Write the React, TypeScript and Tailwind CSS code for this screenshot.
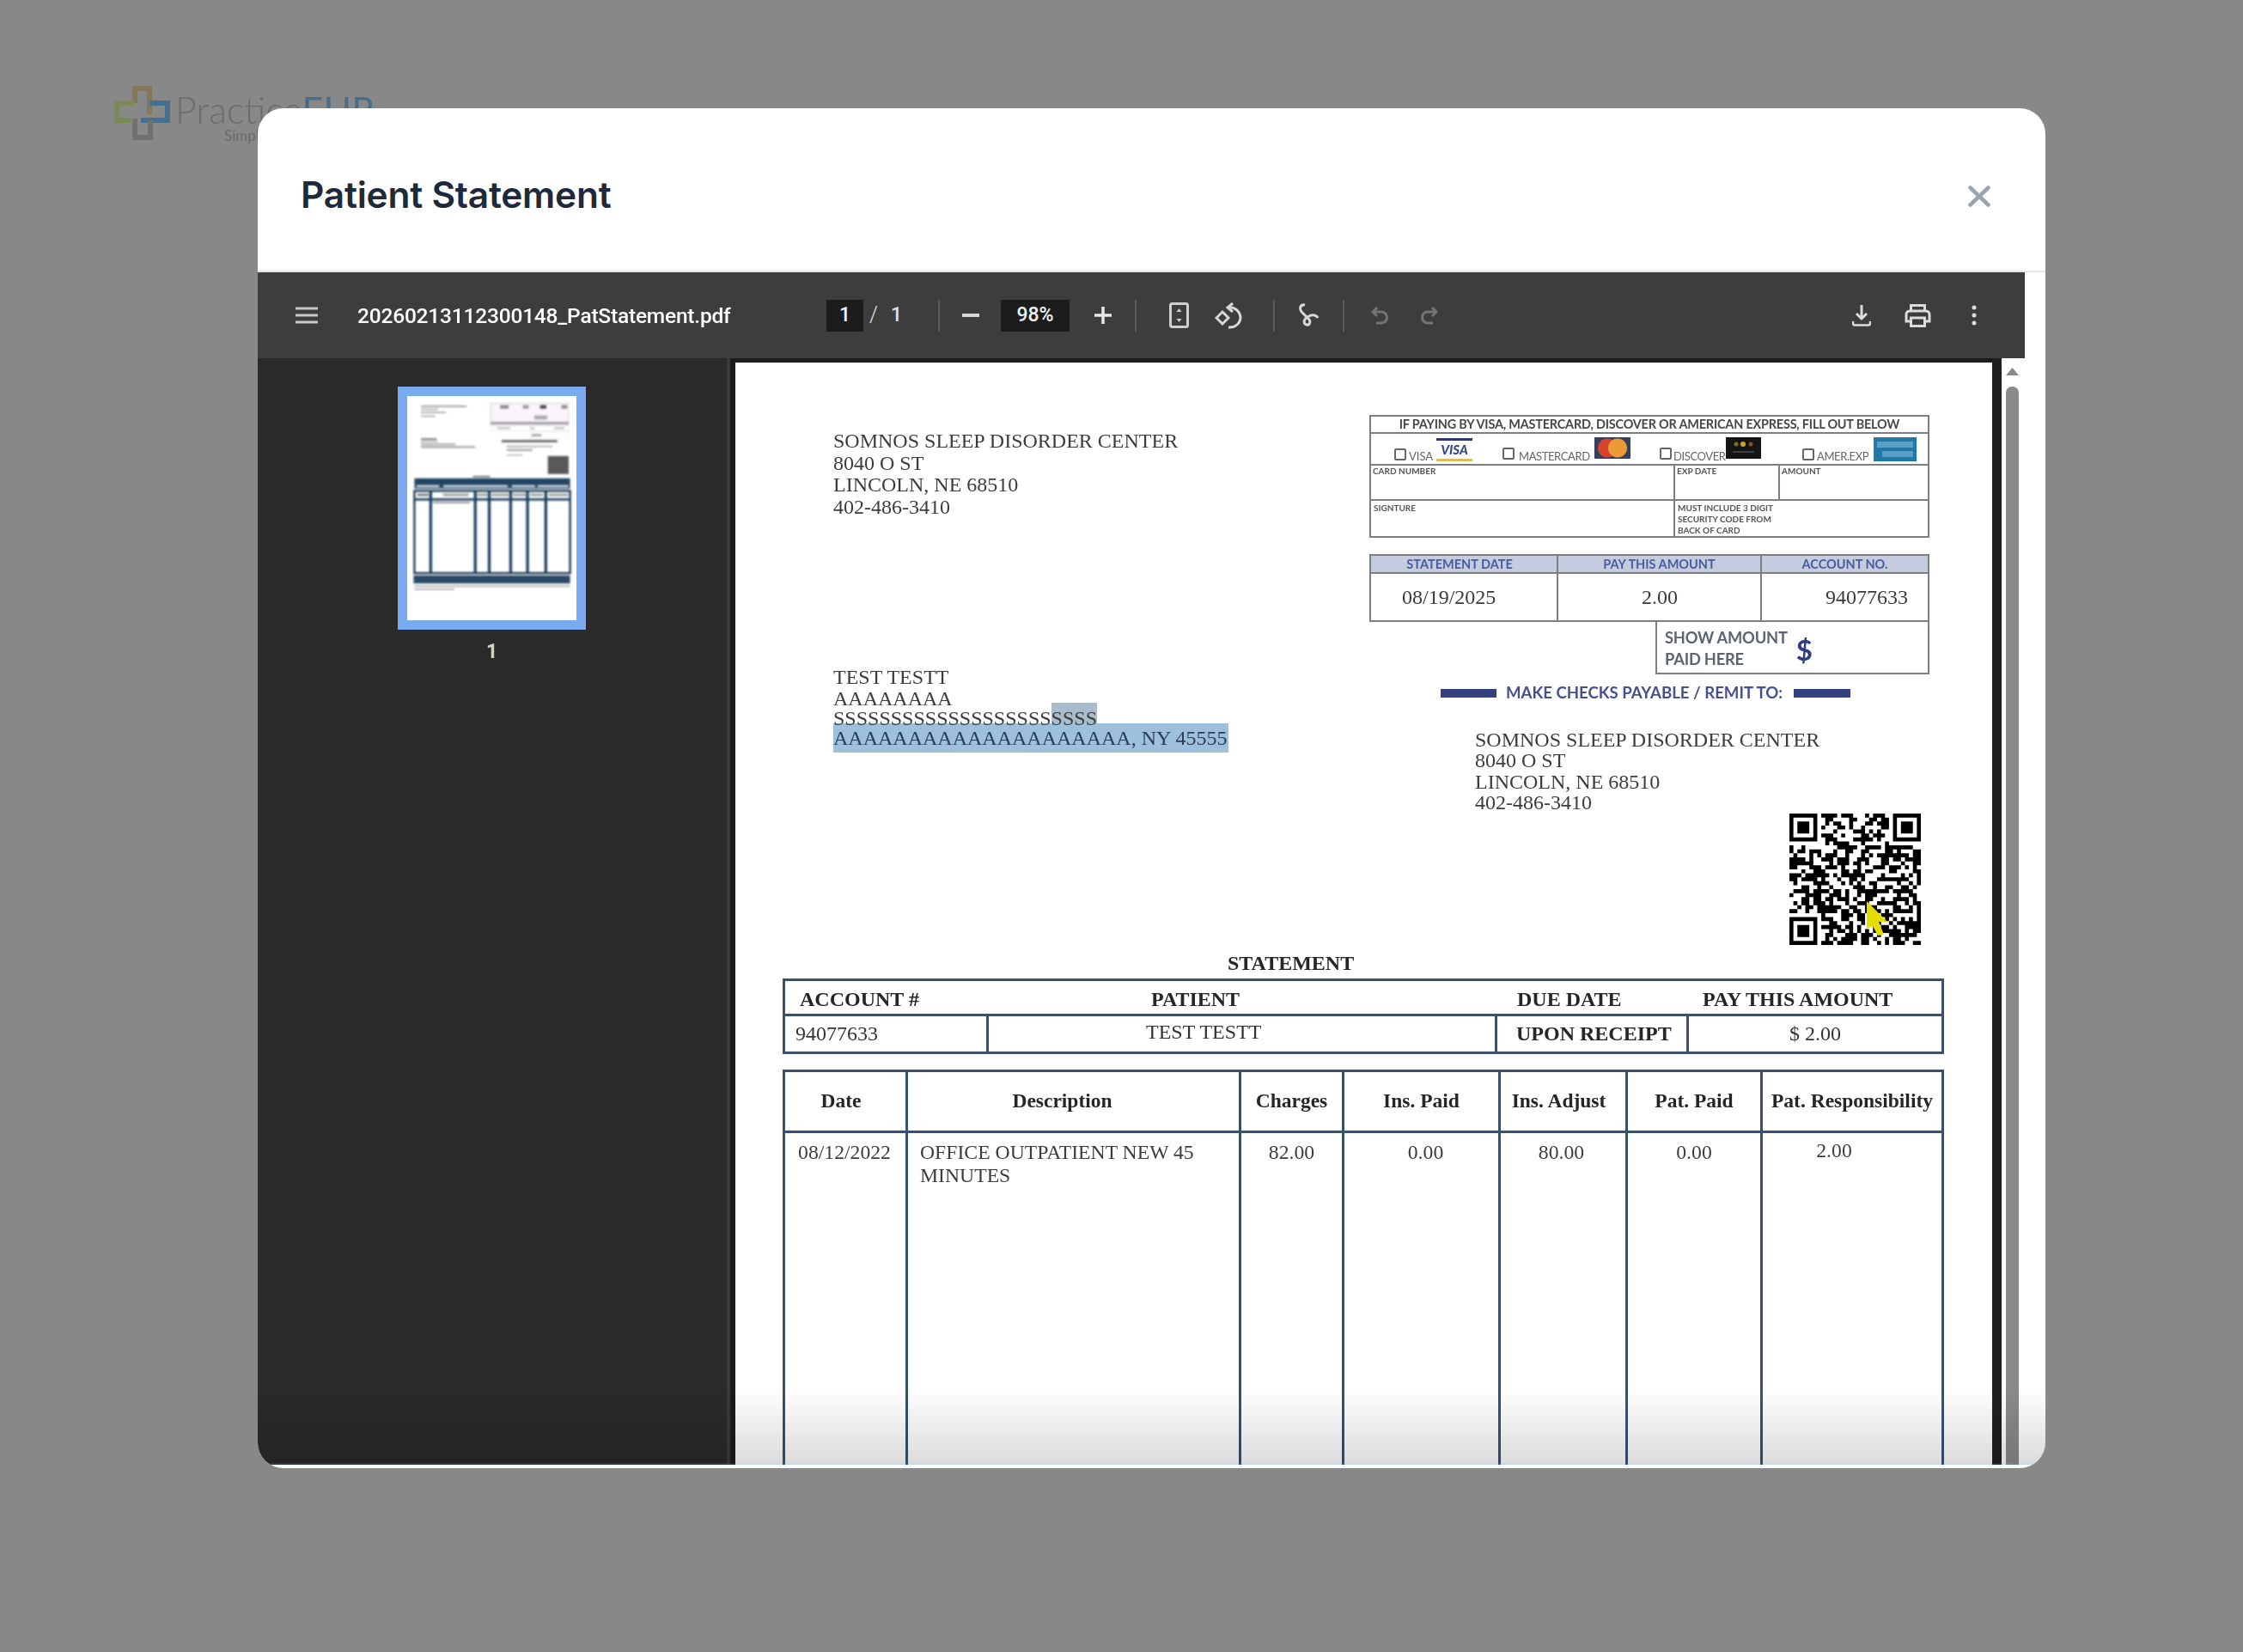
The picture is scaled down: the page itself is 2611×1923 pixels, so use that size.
import React from "react";

const serif = "font-['Liberation_Serif',serif]";
const lato = "font-['Lato',sans-serif]";

function qrPath(): string {
  const n = 33;
  const g: number[][] = Array.from({ length: n }, () => Array(n).fill(0));
  let s = 0x2f6e2b1;
  const rnd = () => {
    s ^= s << 13;
    s ^= s >>> 17;
    s ^= s << 5;
    s >>>= 0;
    return s;
  };
  for (let y = 0; y < n; y++) for (let x = 0; x < n; x++) g[y][x] = rnd() % 100 < 54 ? 1 : 0;
  const finder = (ox: number, oy: number) => {
    for (let y = -1; y < 8; y++)
      for (let x = -1; x < 8; x++) {
        const X = ox + x;
        const Y = oy + y;
        if (X < 0 || Y < 0 || X >= n || Y >= n) continue;
        const ring = x >= 0 && x <= 6 && y >= 0 && y <= 6 && (x === 0 || x === 6 || y === 0 || y === 6);
        const core = x >= 2 && x <= 4 && y >= 2 && y <= 4;
        g[Y][X] = ring || core ? 1 : 0;
      }
  };
  finder(0, 0);
  finder(n - 7, 0);
  finder(0, n - 7);
  let d = "";
  for (let y = 0; y < n; y++) for (let x = 0; x < n; x++) if (g[y][x]) d += `M${x} ${y}h1v1h-1z`;
  return d;
}

function QR() {
  return (
    <svg viewBox="0 0 153 153" className="h-[153px] w-[153px] blur-[0.5px]">
      <g transform="scale(4.636)">
        <path d={qrPath()} fill="#000" />
      </g>
      <polygon points="90,102 114,126 104,126 110,141 103,142 97,131 90,134" fill="#e6dd00" />
    </svg>
  );
}

function Logo() {
  return (
    <div className="flex items-start pl-[133px] pt-[100px] blur-[0.6px]">
      <svg viewBox="0 0 65 63" className="h-[63px] w-[65px] shrink-0">
        <g fill="none" strokeWidth="6">
          <path d="M24 20V3h17v30" stroke="#84775a" />
          <path d="M24 20H3v20h17" stroke="#7b8858" />
          <path d="M41 20h21v20H31" stroke="#47708e" />
          <path d="M24 38v22h18V40" stroke="#707070" />
        </g>
      </svg>
      <div className="ml-[6px] flex flex-col">
        <div className="mt-[6px] font-['Lato',sans-serif] text-[43px] leading-[43px] font-light whitespace-nowrap text-[#6c6c6c]">
          Practice<span className="font-normal text-[#4a6c88]">EHR</span>
        </div>
        <div className="ml-[57px] font-['Lato',sans-serif] text-[17px] leading-[18px] text-[#6a6a6a]">Simplified</div>
      </div>
    </div>
  );
}

const sep = "h-[37px] w-[2px] shrink-0 bg-[#5a5a5a]";
const ico = "shrink-0";

function Toolbar() {
  return (
    <div className="flex h-[100px] w-full shrink-0 items-center bg-[#3d3d3d] pl-[44px] font-['Roboto',sans-serif] text-[#f0f0f0]">
      <svg width="26" height="20" viewBox="0 0 26 20" className={ico}>
        <path d="M0 2h26M0 10h26M0 18h26" stroke="#c8c8c8" strokeWidth="3" />
      </svg>
      <div className="ml-[46px] mt-[2px] w-[434px] shrink-0 text-[24.500px] leading-none font-medium tracking-[-0.2px] whitespace-nowrap text-white blur-[0.5px]">20260213112300148_PatStatement.pdf</div>
      <div className="ml-[112px] flex h-[37px] w-[43px] shrink-0 items-center justify-center bg-[#1c1c1c] text-[23px] font-medium">1</div>
      <div className="ml-[7px] text-[25px] font-light text-[#e0e0e0]">/</div>
      <div className="ml-[15px] text-[23px] font-medium text-[#e0e0e0]">1</div>
      <div className={`ml-[42px] ${sep}`} />
      <svg width="20" height="4" viewBox="0 0 20 4" className={`ml-[26px] ${ico}`}>
        <rect width="20" height="4" fill="#d8d8d8" />
      </svg>
      <div className="ml-[25px] flex h-[37px] w-[80px] shrink-0 items-center justify-center bg-[#1c1c1c] text-[23px] font-medium">98%</div>
      <svg width="20" height="20" viewBox="0 0 20 20" className={`ml-[29px] ${ico}`}>
        <path d="M10 0v20M0 10h20" stroke="#e8e8e8" strokeWidth="3.500" />
      </svg>
      <div className={`ml-[27px] ${sep}`} />
      <svg width="23" height="30" viewBox="0 0 23 30" className={`ml-[38px] ${ico}`}>
        <rect x="1.500" y="1.500" width="20" height="27" rx="2" fill="none" stroke="#cfcfcf" strokeWidth="3" />
        <path d="M11.500 7l3 4h-6zM11.500 23l3-4h-6z" fill="#cfcfcf" />
      </svg>
      <svg width="32" height="31" viewBox="0 0 32 31" className={`ml-[30px] ${ico}`}>
        <path d="M9 11l7 7-7 7-7-7z" fill="none" stroke="#d8d8d8" strokeWidth="3" />
        <path d="M16 6c7-1 13 4 14 11 0 7-6 13-14 12" fill="none" stroke="#d8d8d8" strokeWidth="3" />
        <path d="M21 1l-6 5 6 5" fill="none" stroke="#d8d8d8" strokeWidth="3" />
      </svg>
      <div className={`ml-[36px] ${sep}`} />
      <svg width="28" height="31" viewBox="0 0 28 31" className={`ml-[25px] ${ico}`}>
        <path d="M10 3C4 2 3 8 7 12l8 8c2 3 0 7-3 6-4-1-4-6 1-9 5-3 10-3 12 1" fill="none" stroke="#d8d8d8" strokeWidth="3" />
      </svg>
      <div className={`ml-[26px] ${sep}`} />
      <svg width="20" height="21" viewBox="0 0 20 21" className={`ml-[31px] ${ico}`}>
        <path d="M7 1L2 6l5 5M2 6h10a6.500 6.500 0 0 1 0 13H6" fill="none" stroke="#747474" strokeWidth="3" />
      </svg>
      <svg width="20" height="21" viewBox="0 0 20 21" className={`ml-[38px] ${ico}`}>
        <path d="M13 1l5 5-5 5M18 6H8a6.500 6.500 0 0 0 0 13h6" fill="none" stroke="#747474" strokeWidth="3" />
      </svg>
      <div className="flex-1" />
      <svg width="22" height="25" viewBox="0 0 22 25" className={ico}>
        <path d="M11 0v15M5 10l6 6 6-6" fill="none" stroke="#dcdcdc" strokeWidth="3" />
        <path d="M1 19v2.500a2 2 0 0 0 2 2h16a2 2 0 0 0 2-2V19" fill="none" stroke="#dcdcdc" strokeWidth="2.500" />
      </svg>
      <svg width="31" height="27" viewBox="0 0 31 27" className={`ml-[39px] ${ico}`}>
        <path d="M7.500 8V1.500h16V8M7.500 20H2v-8a4 4 0 0 1 4-4h19a4 4 0 0 1 4 4v8h-5.500" fill="none" stroke="#dcdcdc" strokeWidth="3" />
        <rect x="7.500" y="16" width="16" height="9.500" fill="none" stroke="#dcdcdc" strokeWidth="3" />
      </svg>
      <svg width="6" height="24" viewBox="0 0 6 24" className={`ml-[47px] ${ico}`}>
        <circle cx="3" cy="3" r="2.500" fill="#dcdcdc" />
        <circle cx="3" cy="12" r="2.500" fill="#dcdcdc" />
        <circle cx="3" cy="21" r="2.500" fill="#dcdcdc" />
      </svg>
      <div className="w-[56px] shrink-0" />
    </div>
  );
}

function Thumb() {
  const bars = [182, 338, 387, 462, 521, 585];
  return (
    <div className="ml-[163px] mt-[33px] flex w-[219px] flex-col items-center">
      <div className="h-[283px] w-[219px] border-[11px] border-[#7aaaf0] bg-white">
        <svg viewBox="100 92 592 785" className="h-full w-full blur-[0.8px]">
          <g fill="#a8a8a8">
            <rect x="148" y="125" width="160" height="6" />
            <rect x="148" y="136" width="60" height="5" />
            <rect x="148" y="147" width="88" height="5" />
            <rect x="148" y="160" width="50" height="5" />
            <rect x="148" y="240" width="55" height="6" fill="#777" />
            <rect x="148" y="250" width="60" height="4" />
            <rect x="148" y="258" width="120" height="6" />
            <rect x="148" y="267" width="190" height="7" />
          </g>
          <rect x="392" y="118" width="273" height="76" fill="#fbf4fa" stroke="#aaa" strokeWidth="1.500" />
          <rect x="425" y="124" width="30" height="12" fill="#888" />
          <rect x="505" y="124" width="20" height="12" fill="#999" />
          <rect x="565" y="124" width="22" height="12" fill="#444" />
          <rect x="640" y="124" width="20" height="12" fill="#888" />
          <rect x="545" y="160" width="45" height="14" fill="#aaa" />
          <rect x="392" y="183" width="273" height="7" fill="#8f8fa0" />
          <rect x="392" y="196" width="273" height="18" fill="#fff" stroke="#bbb" />
          <rect x="415" y="202" width="45" height="5" fill="#aaa" />
          <rect x="530" y="202" width="15" height="5" fill="#aaa" />
          <rect x="615" y="202" width="35" height="5" fill="#aaa" />
          <rect x="530" y="218" width="135" height="22" fill="#fff" stroke="#ccc" />
          <rect x="535" y="226" width="35" height="6" fill="#888" />
          <rect x="430" y="246" width="195" height="8" fill="#666" />
          <rect x="448" y="266" width="160" height="5" fill="#aaa" />
          <rect x="448" y="278" width="90" height="6" fill="#999" />
          <rect x="448" y="296" width="55" height="5" fill="#bbb" />
          <rect x="592" y="302" width="73" height="63" fill="#59595a" />
          <rect x="330" y="372" width="60" height="4" fill="#444" />
          <rect x="125" y="380" width="545" height="36" fill="#234664" />
          <rect x="132" y="404" width="80" height="7" fill="#dfe8f0" />
          <rect x="226" y="404" width="226" height="7" fill="#dfe8f0" />
          <rect x="466" y="404" width="82" height="7" fill="#dfe8f0" />
          <rect x="556" y="404" width="108" height="7" fill="#dfe8f0" />
          <rect x="125" y="424" width="545" height="288" fill="#fff" stroke="#17354f" strokeWidth="7" />
          <rect x="125" y="450" width="545" height="8" fill="#234664" />
          <rect x="135" y="434" width="40" height="8" fill="#777" />
          <rect x="225" y="434" width="90" height="8" fill="#999" />
          <rect x="345" y="434" width="35" height="8" fill="#999" />
          <rect x="395" y="434" width="60" height="8" fill="#999" />
          <rect x="470" y="434" width="45" height="8" fill="#999" />
          <rect x="530" y="434" width="45" height="8" fill="#999" />
          <rect x="595" y="434" width="68" height="8" fill="#999" />
          {bars.map((x) => (
            <rect key={x} x={x - 5} y="424" width="10" height="288" fill="#1f4060" />
          ))}
          <rect x="190" y="462" width="130" height="6" fill="#999" />
          <rect x="122" y="720" width="548" height="28" fill="#2b4865" />
          <rect x="125" y="755" width="545" height="5" fill="#aaa" />
          <rect x="125" y="766" width="140" height="5" fill="#aaa" />
        </svg>
      </div>
      <div className="mt-[15px] font-['Roboto',sans-serif] text-[23px] leading-[22px] font-bold text-[#d4d4d4]">1</div>
    </div>
  );
}

function Check({ className }: { className: string }) {
  return <span className={`inline-block h-[14px] w-[14px] shrink-0 rounded-[2px] border-2 border-[#666] ${className}`} />;
}

function CardLogos() {
  return (
    <div className={`flex h-[35px] items-start text-[13px] text-[#666] ${lato}`}>
      <Check className="ml-[27px] mt-[17px]" />
      <span className="ml-[3px] mt-[18px] w-[26px] leading-[16px]">VISA</span>
      <div className="ml-[6px] mt-[5px] flex h-[27px] w-[42px] flex-col justify-between bg-white">
        <div className="h-[3px] bg-[#2c3a6b]" />
        <div className="text-center text-[15px] leading-[15px] font-black text-[#33478a] italic">VISA</div>
        <div className="h-[3px] bg-[#e2bb5a]" />
      </div>
      <Check className="ml-[35px] mt-[16px]" />
      <span className="ml-[5px] mt-[18px] w-[78px] leading-[16px] tracking-[-0.4px] whitespace-nowrap">MASTERCARD</span>
      <svg width="42" height="25" viewBox="0 0 42 25" className="ml-[10px] mt-[4px] shrink-0">
        <rect width="42" height="25" fill="#35405e" rx="1" />
        <circle cx="15" cy="12.500" r="11" fill="#d8442b" />
        <circle cx="27" cy="12.500" r="11" fill="#eb9a35" />
      </svg>
      <Check className="ml-[34px] mt-[16px]" />
      <span className="ml-[2px] mt-[18px] w-[57px] leading-[16px] tracking-[-0.4px]">DISCOVER</span>
      <svg width="41" height="25" viewBox="0 0 41 25" className="ml-[4px] mt-[4px] shrink-0">
        <rect width="41" height="25" fill="#141414" />
        <circle cx="12" cy="8" r="2.500" fill="#7a6e22" />
        <circle cx="20" cy="8" r="3" fill="#c7a52a" />
        <circle cx="29" cy="8" r="2.500" fill="#8f4a22" />
        <rect x="8" y="16" width="25" height="2" fill="#3f3f3f" />
      </svg>
      <Check className="ml-[48px] mt-[17px]" />
      <span className="ml-[3px] mt-[18px] w-[57px] leading-[16px] tracking-[-0.4px]">AMER.EXP</span>
      <svg width="50" height="28" viewBox="0 0 50 28" className="ml-[9px] mt-[4px] shrink-0">
        <rect width="50" height="28" fill="#2279a8" />
        <rect x="4" y="5" width="42" height="7" fill="#5d9fc8" />
        <rect x="10" y="16" width="36" height="7" fill="#5d9fc8" />
      </svg>
    </div>
  );
}

function RightTop() {
  const b = "border-[#7b7f85]";
  const small = `text-[10px] leading-[12px] font-bold text-[#555] ${lato}`;
  return (
    <div className="w-[652px] shrink-0 pt-[61px]">
      <div className={`flex h-[143px] flex-col border-2 ${b}`}>
        <div className={`flex h-[20px] shrink-0 items-center justify-center border-b-2 ${b} text-[14.450px] font-bold tracking-[-0.2px] whitespace-nowrap text-[#474747] ${lato}`}>
          IF PAYING BY VISA, MASTERCARD, DISCOVER OR AMERICAN EXPRESS, FILL OUT BELOW
        </div>
        <div className={`border-b-2 ${b}`}>
          <CardLogos />
        </div>
        <div className={`flex h-[41px] border-b-2 ${b}`}>
          <div className={`w-[354px] border-r-2 ${b} pl-[2px] ${small}`}>CARD NUMBER</div>
          <div className={`w-[122px] border-r-2 ${b} pl-[2px] ${small}`}>EXP DATE</div>
          <div className={`flex-1 pl-[2px] ${small}`}>AMOUNT</div>
        </div>
        <div className="flex flex-1">
          <div className={`w-[354px] border-r-2 ${b} pl-[3px] pt-[2px] ${small}`}>SIGNTURE</div>
          <div className={`pl-[3px] pt-[2px] ${small} leading-[13px]`}>
            MUST INCLUDE 3 DIGIT<br />SECURITY CODE FROM<br />BACK OF CARD
          </div>
        </div>
      </div>
      <div className={`mt-[19px] h-[79px] border-2 ${b}`}>
        <div className={`flex h-[21px] border-b-2 ${b} bg-[#c6ccdf] text-[14.500px] leading-[19px] font-bold text-[#4a5b9c] ${lato}`}>
          <div className={`w-[218px] border-r-2 ${b} pr-[10px] text-center`}>STATEMENT DATE</div>
          <div className={`w-[237px] border-r-2 ${b} text-center`}>PAY THIS AMOUNT</div>
          <div className="flex-1 text-center">ACCOUNT NO.</div>
        </div>
        <div className={`flex h-[54px] items-center text-[24px] text-[#3a3a3a] ${serif}`}>
          <div className={`h-full w-[218px] border-r-2 ${b} pl-[36px] leading-[54px]`}>08/19/2025</div>
          <div className={`h-full w-[237px] border-r-2 ${b} pl-[97px] leading-[54px]`}>2.00</div>
          <div className="h-full flex-1 pl-[74px] leading-[54px]">94077633</div>
        </div>
      </div>
      <div className={`ml-[333px] mt-[-1px] flex h-[62px] border-2 border-t-0 ${b} pl-[9px] pt-[7px]`}>
        <div className={`text-[18.300px] leading-[25px] font-bold tracking-[-0.2px] whitespace-nowrap text-[#5b6472] ${lato}`}>
          SHOW AMOUNT<br />PAID HERE
        </div>
        <div className={`ml-[10px] mt-[8px] text-[33px] leading-[36px] font-bold text-[#2f3d80] ${lato}`}>$</div>
      </div>
      <div className="ml-[83px] mt-[15px] flex h-[14px] items-center">
        <div className="h-[10px] w-[65px] bg-[#33407f]" />
        <div className={`ml-[11px] w-[335px] text-[18.600px] font-bold whitespace-nowrap text-[#46518c] ${lato}`}>MAKE CHECKS PAYABLE / REMIT TO:</div>
        <div className="h-[10px] w-[66px] bg-[#33407f]" />
      </div>
      <div className={`ml-[123px] mt-[35px] h-[98px] text-[24px] leading-[24.300px] whitespace-nowrap text-[#3c3c3c] ${serif}`}>
        <div>SOMNOS SLEEP DISORDER CENTER</div>
        <div>8040 O ST</div>
        <div>LINCOLN, NE 68510</div>
        <div>402-486-3410</div>
      </div>
      <div className="ml-[489px]">
        <QR />
      </div>
    </div>
  );
}

function LeftTop() {
  return (
    <div className={`w-[738px] shrink-0 pl-[114px] pt-[79px] text-[24px] whitespace-nowrap text-[#3c3c3c] ${serif}`}>
      <div className="h-[102px] leading-[25.600px]">
        <div>SOMNOS SLEEP DISORDER CENTER</div>
        <div>8040 O ST</div>
        <div>LINCOLN, NE 68510</div>
        <div>402-486-3410</div>
      </div>
      <div className="mt-[173px] h-[25px] leading-[24px]">TEST TESTT</div>
      <div className="h-[17px] leading-[24px]">AAAAAAAA</div>
      <div className="flex h-[24px] leading-[36px]">
        <span className="h-[24px]">SSSSSSSSSSSSSSSSSSS</span>
        <span className="h-[24px] bg-[#a9bccb]">SSSS</span>
      </div>
      <div className="h-[34px] w-[460px] bg-[#9fc0dd] leading-[34px] text-[#2a3d55]">AAAAAAAAAAAAAAAAAAAA, NY 45555</div>
    </div>
  );
}

function Statement() {
  const line = "border-[#3b5169]";
  const cols = "grid grid-cols-[143px_388px_120px_182px_148px_157px_1fr]";
  const thBase = "flex h-full items-center justify-center text-[23.500px] font-bold whitespace-nowrap text-[#262626]";
  const th = `${thBase} border-r-[3px] ${line}`;
  const tdBase = "h-full text-center text-[23.700px] leading-[27px] text-[#3c3c3c]";
  const td = `${tdBase} pt-[9px] border-r-[3px] ${line}`;
  return (
    <div className={`ml-[55px] w-[1352px] ${serif}`}>
      <div className="pl-[518px] text-[24px] leading-[24px] font-bold whitespace-nowrap text-[#262626]">STATEMENT</div>
      <div className={`mt-[6px] h-[88px] border-[3px] ${line}`}>
        <div className={`flex h-[41px] items-center border-b-[3px] ${line} pt-[3px] text-[24px] font-bold whitespace-nowrap text-[#262626]`}>
          <span className="w-[426px] pl-[17px]">ACCOUNT #</span>
          <span className="w-[426px]">PATIENT</span>
          <span className="w-[216px]">DUE DATE</span>
          <span>PAY THIS AMOUNT</span>
        </div>
        <div className="flex h-[41px] items-center whitespace-nowrap text-[24px] text-[#333]">
          <div className={`h-full w-[237px] border-r-[3px] ${line} pl-[12px] leading-[41px]`}>94077633</div>
          <div className={`h-full w-[592px] border-r-[3px] ${line} pl-[183px] leading-[36px]`}>TEST TESTT</div>
          <div className={`h-full w-[223px] border-r-[3px] ${line} pl-[22px] leading-[41px] font-bold text-[#262626]`}>UPON RECEIPT</div>
          <div className="h-full flex-1 pl-[117px] leading-[41px]">$ 2.00</div>
        </div>
      </div>
      <div className={`mt-[18px] h-[480px] border-x-[3px] border-t-[3px] ${line}`}>
        <div className={`${cols} h-[71px] border-b-[3px] ${line}`}>
          <div className={`${th} pr-[10px]`}>Date</div>
          <div className={`${th} pr-[26px]`}>Description</div>
          <div className={th}>Charges</div>
          <div className={th}>Ins. Paid</div>
          <div className={`${th} pr-[10px]`}>Ins. Adjust</div>
          <div className={th}>Pat. Paid</div>
          <div className={thBase}>Pat. Responsibility</div>
        </div>
        <div className={`${cols} h-[406px]`}>
          <div className={`${td} pr-[2px]`}>08/12/2022</div>
          <div className={`${td} pl-[14px] text-left`}>OFFICE OUTPATIENT NEW 45<br />MINUTES</div>
          <div className={td}>82.00</div>
          <div className={`${td} pl-[10px]`}>0.00</div>
          <div className={`${td} pr-[4px]`}>80.00</div>
          <div className={td}>0.00</div>
          <div className={`${tdBase} pr-[42px] pt-[7px] text-[22px]`}>2.00</div>
        </div>
      </div>
    </div>
  );
}

export default function App() {
  return (
    <div className="relative h-[1923px] w-[2611px] overflow-hidden bg-[#888888]">
      <Logo />
      <div className="absolute inset-0 flex items-start justify-start pl-[300px] pt-[126px]">
        <div className="relative flex h-[1583px] w-[2081px] flex-col overflow-hidden rounded-[30px] bg-white">
          <div className="flex h-[191px] shrink-0 items-center justify-between border-b-2 border-[#e5e7eb] pl-[50px] pr-[64px] pt-[12px]">
            <h1 className="font-['Inter',sans-serif] text-[42.400px] leading-[44px] font-semibold tracking-[-0.2px] whitespace-nowrap text-[#1e293b]">Patient Statement</h1>
            <svg width="26" height="25" viewBox="0 0 26 25" className="mt-[3px] shrink-0">
              <path d="M2.500 2.500l21 20M23.500 2.500l-21 20" stroke="#9ca3af" strokeWidth="4.500" strokeLinecap="round" />
            </svg>
          </div>
          <div className="flex min-h-0 w-[2057px] flex-1 flex-col">
            <Toolbar />
            <div className="flex min-h-0 flex-1 overflow-hidden">
              <div className="flex w-[556px] shrink-0 border-r-[6px] border-[#1c1c1c] bg-[#2a2a2a]">
                <div className="flex-1 border-r-4 border-[#3a3a3a]">
                  <Thumb />
                </div>
              </div>
              <div className="flex w-[1463px] shrink-0 flex-col border-t-[5px] border-[#1c1c1c] bg-white">
                <div className="h-[687px] shrink-0 blur-[0.5px]">
                  <div className="flex">
                    <LeftTop />
                    <RightTop />
                  </div>
                </div>
                <div className="blur-[0.4px]">
                  <Statement />
                </div>
              </div>
              <div className="w-[11px] shrink-0 bg-[#1f1f1f]" />
              <div className="flex w-[27px] shrink-0 flex-col items-start bg-white pl-[5px] pt-[11px]">
                <svg width="15" height="9" viewBox="0 0 15 9" className="shrink-0">
                  <path d="M7.500 0L15 9H0z" fill="#8a8a8a" />
                </svg>
                <div className="mt-[13px] w-[15px] flex-1 rounded-t-[7px] bg-[#8a8a8a]" />
              </div>
            </div>
          </div>
          <div className="h-[4px] shrink-0" />
          <div className="pointer-events-none absolute inset-x-0 bottom-[4px] h-[90px] border-b-2 border-[#1a6fb0]/25 bg-linear-to-b from-black/0 to-black/14" />
        </div>
      </div>
    </div>
  );
}
